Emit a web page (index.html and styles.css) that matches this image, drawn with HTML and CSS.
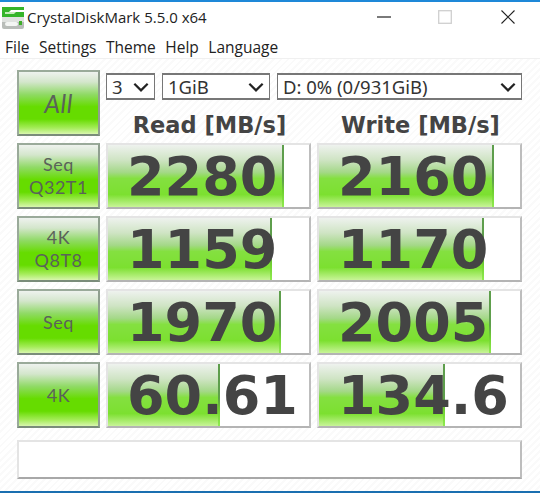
FILE: index.html
```html
<!DOCTYPE html>
<html lang="en">
<head>
<meta charset="utf-8">
<title>CrystalDiskMark 5.5.0 x64</title>
<link rel="stylesheet" href="styles.css">
</head>
<body>
<div class="window">
  <header class="titlebar">
    <svg class="app-icon" viewBox="0 0 24 24" width="24" height="24" aria-hidden="true">
      <rect x="1" y="11" width="22" height="12" rx="2" fill="#b9bdb9"/>
      <rect x="1" y="11" width="22" height="5" fill="#dfe2df"/>
      <rect x="4" y="16" width="13" height="4" rx="2" fill="#f4f6f4"/>
      <rect x="18" y="15" width="3" height="4" fill="#3fae2a"/>
      <path d="M1 1H23V4H10L8 6H23V11H1Z" fill="#35b52a"/>
      <path d="M4 6H15L13 8H4Z" fill="#c4ecb9"/>
    </svg>
    <span class="title">CrystalDiskMark 5.5.0 x64</span>
    <div class="controls">
      <span class="ctl"><svg viewBox="0 0 14 14" width="14" height="14"><path d="M0 7H14" stroke="#222" stroke-width="1.2"/></svg></span>
      <span class="ctl"><svg viewBox="0 0 14 14" width="14" height="14"><rect x=".7" y=".7" width="12.6" height="12.6" fill="none" stroke="#cfcfcf" stroke-width="1.3"/></svg></span>
      <span class="ctl"><svg viewBox="0 0 14 14" width="14" height="14"><path d="M.5 .5L13.5 13.5M13.5 .5L.5 13.5" stroke="#222" stroke-width="1.1"/></svg></span>
    </div>
  </header>
  <nav class="menu">
    <span>File</span><span>Settings</span><span>Theme</span><span>Help</span><span>Language</span>
  </nav>
  <main class="panel">
    <div class="grid">
      <button class="btn all">All</button>
      <div class="head">
        <div class="selects">
          <div class="select s-count">3<svg class="chev" viewBox="0 0 14 9" width="16" height="10"><path d="M1 1.5L7 7.5L13 1.5" fill="none" stroke="#222" stroke-width="2"/></svg></div>
          <div class="select s-size">1GiB<svg class="chev" viewBox="0 0 14 9" width="16" height="10"><path d="M1 1.5L7 7.5L13 1.5" fill="none" stroke="#222" stroke-width="2"/></svg></div>
          <div class="select s-drive">D: 0% (0/931GiB)<svg class="chev" viewBox="0 0 14 9" width="16" height="10"><path d="M1 1.5L7 7.5L13 1.5" fill="none" stroke="#222" stroke-width="2"/></svg></div>
        </div>
        <div class="cols"><span>Read [MB/s]</span><span>Write [MB/s]</span></div>
      </div>

      <button class="btn">Seq<br>Q32T1</button>
      <div class="bar"><div class="fill" style="width:176px"></div><span class="val">2280</span></div>
      <div class="bar"><div class="fill" style="width:175px"></div><span class="val">2160</span></div>

      <button class="btn">4K<br>Q8T8</button>
      <div class="bar"><div class="fill" style="width:164px"></div><span class="val">1159</span></div>
      <div class="bar"><div class="fill" style="width:165px"></div><span class="val">1170</span></div>

      <button class="btn">Seq</button>
      <div class="bar"><div class="fill" style="width:173px"></div><span class="val">1970</span></div>
      <div class="bar"><div class="fill" style="width:172px"></div><span class="val">2005</span></div>

      <button class="btn">4K</button>
      <div class="bar"><div class="fill" style="width:112px"></div><span class="val">60.61</span></div>
      <div class="bar"><div class="fill" style="width:126px"></div><span class="val">134.6</span></div>
    </div>
    <div class="status"></div>
  </main>
  <div class="edge"></div>
</div>
</body>
</html>
```
FILE: styles.css
```css
* { box-sizing: border-box; }
html, body { margin: 0; padding: 0; }
body { width: 540px; height: 493px; overflow: hidden; background: #fff; font-family: "Open Sans", "Noto Sans", sans-serif; color: #1a1a1a; }
.window { width: 540px; height: 493px; display: flex; flex-direction: column; border-top: 2px solid #1e88d8; }
.titlebar { height: 30px; display: flex; align-items: center; padding-left: 1px; flex: none; }
.app-icon { flex: none; margin-top: 2px; }
.title { font-size: 15px; margin-left: 2px; color: #222; }
.controls { margin-left: auto; display: flex; margin-top: -1px; }
.ctl { height: 24px; display: flex; align-items: center; justify-content: center; }
.ctl:nth-child(1) { width: 61px; }
.ctl:nth-child(2) { width: 61px; }
.ctl:nth-child(3) { width: 65px; }
.menu { height: 26px; padding-top: 3px; display: flex; gap: 9.5px; padding-left: 5px; font-size: 15.5px; align-items: center; flex: none; color: #222; }
.panel { flex: 1; padding: 11px 18px 0 17px; border-top: 1px solid #f0f0f0;
  background: repeating-linear-gradient(135deg, #fff 0 3px, #fafafa 3px 5px); display: flex; flex-direction: column; }
.grid { display: grid; grid-template-columns: 83px 205px 205px; grid-auto-rows: 66px; column-gap: 6px; row-gap: 7px; }
.btn { padding: 0; margin: 0; font-family: "Lato", "DejaVu Sans", sans-serif; font-size: 18px; letter-spacing: .5px; line-height: 23px; color: #5a625a;
  border: 2px solid #8a9c8a; border-color: #9aaa9a #8f9f8f #7a8c7a #9aaa9a;
  background: linear-gradient(#eef2ee 0%, #d4e6cc 16%, #90da66 36%, #66dc00 56%, #66dc00 76%, #a4ec58 90%, #d8f6ae 100%); }
.btn.all { font-size: 25px; font-style: italic; }
.head { grid-column: 2 / span 2; display: flex; flex-direction: column; }
.selects { display: flex; gap: 7px; height: 27px; margin-top: 3px; }
.select { border: 2px solid #777; border-width: 2px 1px 2px 1px; background: #fff; font-family: "Noto Sans", sans-serif; font-size: 18.5px; display: flex; align-items: center; justify-content: space-between; padding: 0 5px; color: #333; }
.s-count { width: 49px; }
.s-size { width: 108px; }
.s-drive { width: 245px; }
.cols { display: grid; grid-template-columns: 205px 205px; column-gap: 6px; margin-top: 10px; font: bold 22.5px/30px "DejaVu Sans", sans-serif; color: #444; text-align: center; }
.cols span { padding-left: 2px; }
.bar { position: relative; border: 2px solid #e4e4e4; border-right-color: #bdbdbd; border-bottom-color: #b4b4b4; background: #fff; overflow: hidden; }
.fill { position: relative; height: 100%;
  background: linear-gradient(#eef2ee 0%, #cfe4c4 24%, #a4d888 44%, #84e040 54%, #7ce030 80%, #c8f498 100%); }
.fill::after { content: ""; position: absolute; right: 0; top: 0; bottom: 0; width: 2px;
  background: linear-gradient(#5e9e4c 0%, #5e9e4c 55%, #70d030 75%, #90ec50 100%); }
.val { position: absolute; left: 19px; top: 2px; font: bold 54px/60px "DejaVu Sans", sans-serif; color: #444; }
.status { margin-top: 12px; height: 39px; width: 505px; border: 2px solid #e4e4e4; border-right-color: #bdbdbd; border-bottom-color: #a8a8a8; background: #fff; }
.edge { flex: none; height: 2px; background: #1a6fb0; }
```
